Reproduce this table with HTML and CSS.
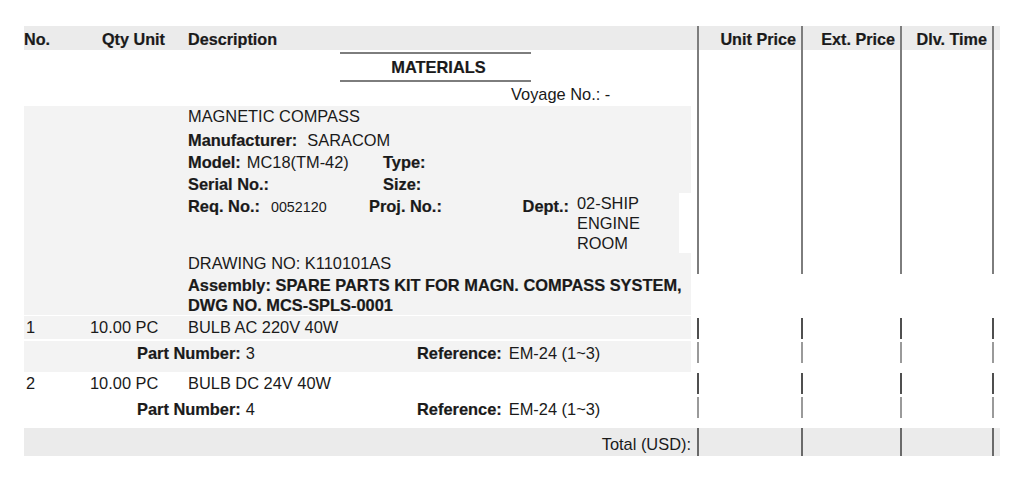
FILE: index.html
```html
<!DOCTYPE html>
<html>
<head>
<meta charset="utf-8">
<link rel="stylesheet" href="styles.css">
</head>
<body>
<div class="sheet">
  <div class="grid head">
    <div class="main hcols"><span class="h-no">No.</span><span class="h-qty">Qty Unit</span><span>Description</span></div>
    <div class="pc">Unit Price</div>
    <div class="pc">Ext. Price</div>
    <div class="pc last">Dlv. Time</div>
  </div>

  <div class="grid">
    <div class="main">
      <div class="mat-wrap"><div class="materials">MATERIALS</div></div>
      <div class="voyage">Voyage No.: -</div>
      <div class="detail detail-top">
        <div class="d-title">MAGNETIC COMPASS</div>
        <div class="d-rows">
          <div class="d-row"><b>Manufacturer:</b><span class="v v-mfr">SARACOM</span></div>
          <div class="d-row"><div class="c1"><b>Model:</b><span class="v">MC18(TM-42)</span></div><div><b>Type:</b></div></div>
          <div class="d-row"><div class="c1"><b>Serial No.:</b></div><div><b>Size:</b></div></div>
          <div class="d-row req">
            <div class="c1r"><b>Req. No.:</b><span class="v v-small">0052120</span></div>
            <div class="c-proj"><b>Proj. No.:</b></div>
            <div class="c-dept"><b>Dept.:</b></div>
            <div class="dept-val"><div class="dv-text">02-SHIP<br>ENGINE<br>ROOM</div><div class="dv-white"></div></div>
          </div>
        </div>
        <div class="d-draw">DRAWING NO: K110101AS</div>
      </div>
    </div>
    <div class="pc"></div>
    <div class="pc"></div>
    <div class="pc last"></div>
  </div>

  <div class="grid">
    <div class="main">
      <div class="detail detail-bottom">Assembly: SPARE PARTS KIT FOR MAGN. COMPASS SYSTEM, DWG NO. MCS-SPLS-0001</div>
    </div>
    <div></div><div></div><div></div>
  </div>

  <div class="grid item g1">
    <div class="main"><div class="irow gray"><span class="i-no">1</span><span class="i-qty">10.00 PC</span><span>BULB AC 220V 40W</span></div></div>
    <div class="seg dark s2"></div><div class="seg dark s2"></div><div class="seg dark s2 last"></div>
  </div>
  <div class="grid part">
    <div class="main"><div class="prow gray"><div class="p-a"><b>Part Number:</b><span class="pv">3</span></div><div><b>Reference:</b><span class="rv">EM-24 (1~3)</span></div></div></div>
    <div class="seg light s1"></div><div class="seg light s1"></div><div class="seg light s1 last"></div>
  </div>

  <div class="grid item">
    <div class="main"><div class="irow"><span class="i-no">2</span><span class="i-qty">10.00 PC</span><span>BULB DC 24V 40W</span></div></div>
    <div class="seg dark s1"></div><div class="seg dark s1"></div><div class="seg dark s1 last"></div>
  </div>
  <div class="grid part">
    <div class="main"><div class="prow"><div class="p-a"><b>Part Number:</b><span class="pv">4</span></div><div><b>Reference:</b><span class="rv">EM-24 (1~3)</span></div></div></div>
    <div class="seg light s0"></div><div class="seg light s0"></div><div class="seg light s0 last"></div>
  </div>

  <div class="grid total">
    <div class="main total-label">Total (USD):</div>
    <div class="pc"></div>
    <div class="pc"></div>
    <div class="pc last"></div>
  </div>
</div>
</body>
</html>
```
FILE: styles.css
```css
* { box-sizing: border-box; }
body {
  margin: 0;
  background: #fff;
  color: #1a1a1a;
  font-family: "Liberation Sans", Arial, sans-serif;
  font-size: 16.4px;
}
b, .head, .materials, .detail-bottom {
  font-weight: bold;
  -webkit-text-stroke: 0.2px currentColor;
}
.sheet {
  padding: 26px 0 0 24px;
  width: 1000px;
}
.grid {
  display: grid;
  grid-template-columns: 673px 104px 99px 94px;
}
.pc { border-left: 2px solid #7d7d7d; }
.pc.last { border-right: 2px solid #7d7d7d; }

/* header */
.head {
  background: #ebebeb;
  height: 24px;
  font-size: 16.2px;
}
.head > * {
  padding-top: 1px;
  line-height: 24px;
}
.head .pc {
  text-align: right;
  padding-right: 5px;
  white-space: nowrap;
}
.hcols { display: flex; }
.h-no { width: 78px; }
.h-qty { width: 86px; }

/* materials title */
.mat-wrap { padding: 2px 0 0 316px; }
.materials {
  width: 191px;
  height: 30px;
  border-top: 2px solid #7d7d7d;
  border-bottom: 2px solid #7d7d7d;
  line-height: 26px;
  text-align: center;
  padding-left: 6px;
}
.voyage {
  padding-left: 487px;
  line-height: 24px;
}

/* detail block */
.detail {
  background: #f3f3f3;
  margin-right: 6px;
  padding-left: 164px;
}
.detail-top { padding-bottom: 1px; }
.d-title { line-height: 20px; }
.d-rows { margin-top: 3px; }
.d-row {
  display: flex;
  align-items: flex-start;
  line-height: 22px;
}
.c1 { width: 195px; }
.c1r { width: 181px; }
.c-proj { width: 150px; }
.c-dept { width: 50px; text-align: right; white-space: nowrap; }
.v { margin-left: 6px; }
.v-mfr { margin-left: 10px; }
.v-small { margin-left: 11px; font-size: 14.3px; }
.dept-val {
  display: flex;
  flex: 1;
  margin-left: 8px;
  margin-top: -2px;
  line-height: 20px;
}
.dv-text { width: 102px; }
.dv-white { flex: 1; background: #fff; }
.d-draw { line-height: 20px; }
.detail-bottom {
  padding-top: 1px;
  padding-right: 4px;
  line-height: 20px;
}

/* item rows */
.g1 { margin-top: 1px; }
.part { margin-top: 2px; }
.irow {
  display: flex;
  height: 23px;
  line-height: 23px;
  margin-right: 6px;
}
.i-no { width: 66px; padding-left: 2px; }
.i-qty { width: 98px; }
.prow {
  display: flex;
  padding: 1px 0 8px;
  line-height: 22px;
  margin-right: 6px;
}
.gray { background: #f3f3f3; }
.p-a { width: 393px; padding-left: 113px; }
.pv { margin-left: 5px; }
.rv { margin-left: 7px; }
.seg {
  align-self: start;
  height: 21px;
  border-left: 2px solid #555;
}
.seg.last { border-right: 2px solid #555; }
.seg.light { border-color: #9a9a9a; }
.seg.dark { border-color: #4f4f4f; }
.s2 { margin-top: 2px; }
.s1 { margin-top: 1px; }
.s0 { margin-top: 0; }

/* total */
.total {
  background: #ebebeb;
  height: 28px;
}
.total .pc { border-color: #6a6a6a; }
.total-label {
  text-align: right;
  padding: 5px 6px 0 0;
  line-height: 22px;
}
```
